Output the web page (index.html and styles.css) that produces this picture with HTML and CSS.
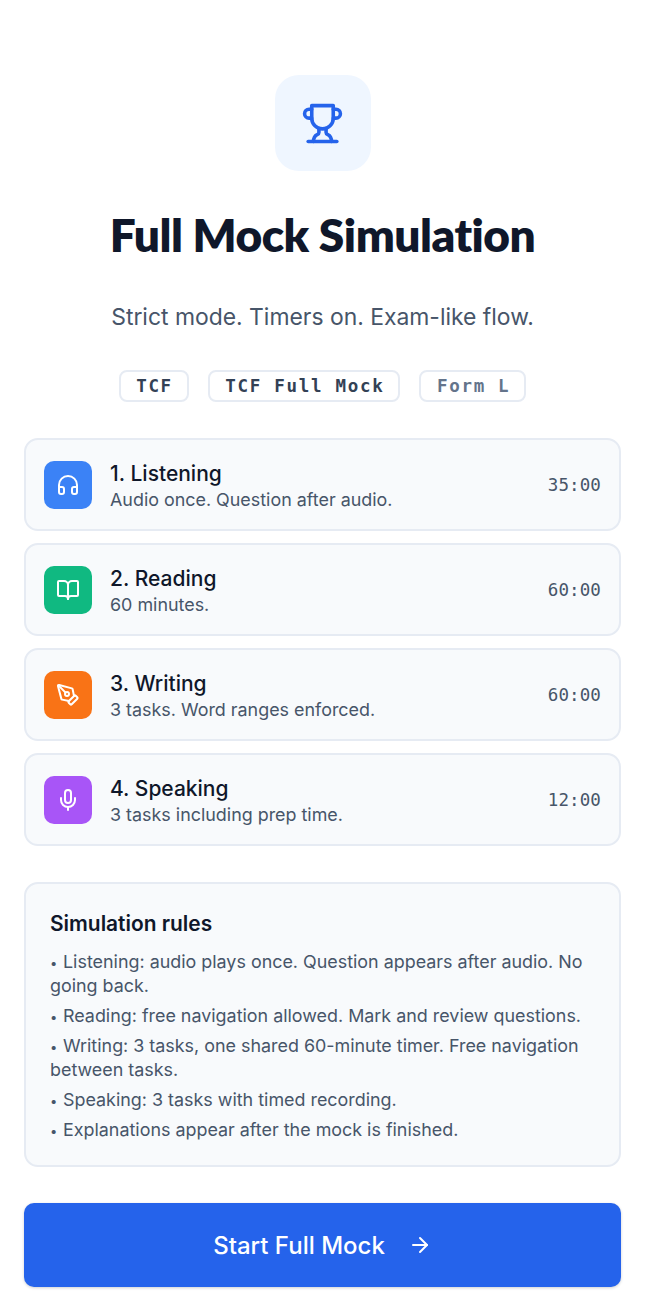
FILE: index.html
```html
<!DOCTYPE html>
<html lang="en">
<head>
  <meta charset="UTF-8" />
  <title>Full Mock Simulation</title>
  <meta name="viewport" content="width=device-width, initial-scale=1.0" />
  <link rel="stylesheet" href="styles.css">
</head>
<body>
  <main class="page">
    <div class="hero-icon">
      <svg class="ico" width="43" height="43" viewBox="0 0 24 24"><path d="M6 9H4.5a2.5 2.5 0 0 1 0-5H6"/><path d="M18 9h1.5a2.5 2.5 0 0 0 0-5H18"/><path d="M4 22h16"/><path d="M10 14.66V17c0 .55-.47.98-.97 1.21C7.85 18.75 7 20.24 7 22"/><path d="M14 14.66V17c0 .55.47.98.97 1.21C16.15 18.75 17 20.24 17 22"/><path d="M18 2H6v7a6 6 0 0 0 12 0V2Z"/></svg>
    </div>
    <h1 class="title">Full Mock Simulation</h1>
    <p class="subtitle">Strict mode. Timers on. Exam-like flow.</p>

    <div class="chips">
      <span class="chip">TCF</span>
      <span class="chip">TCF Full Mock</span>
      <span class="chip chip-muted">Form L</span>
    </div>

    <div class="sections">
      <div class="section">
        <div class="tile tile-blue">
          <svg class="ico" width="24" height="24" viewBox="0 0 24 24"><path d="M3 14h3a2 2 0 0 1 2 2v3a2 2 0 0 1-2 2H5a2 2 0 0 1-2-2v-7a9 9 0 0 1 18 0v7a2 2 0 0 1-2 2h-1a2 2 0 0 1-2-2v-3a2 2 0 0 1 2-2h3"/></svg>
        </div>
        <div class="section-text">
          <div class="section-name">1. Listening</div>
          <div class="section-desc">Audio once. Question after audio.</div>
        </div>
        <div class="section-time">35:00</div>
      </div>
      <div class="section">
        <div class="tile tile-green">
          <svg class="ico" width="24" height="24" viewBox="0 0 24 24"><path d="M12 7v14"/><path d="M3 18a1 1 0 0 1-1-1V4a1 1 0 0 1 1-1h5a4 4 0 0 1 4 4 4 4 0 0 1 4-4h5a1 1 0 0 1 1 1v13a1 1 0 0 1-1 1h-6a3 3 0 0 0-3 3 3 3 0 0 0-3-3z"/></svg>
        </div>
        <div class="section-text">
          <div class="section-name">2. Reading</div>
          <div class="section-desc">60 minutes.</div>
        </div>
        <div class="section-time">60:00</div>
      </div>
      <div class="section">
        <div class="tile tile-orange">
          <svg class="ico" width="24" height="24" viewBox="0 0 24 24"><path d="M15.707 21.293a1 1 0 0 1-1.414 0l-1.586-1.586a1 1 0 0 1 0-1.414l5.586-5.586a1 1 0 0 1 1.414 0l1.586 1.586a1 1 0 0 1 0 1.414z"/><path d="m18 13-1.375-6.874a1 1 0 0 0-.746-.776L3.235 2.028a1 1 0 0 0-1.207 1.207L5.35 15.879a1 1 0 0 0 .776.746L13 18"/><path d="m2.3 2.3 7.286 7.286"/><circle cx="11" cy="11" r="2"/></svg>
        </div>
        <div class="section-text">
          <div class="section-name">3. Writing</div>
          <div class="section-desc">3 tasks. Word ranges enforced.</div>
        </div>
        <div class="section-time">60:00</div>
      </div>
      <div class="section">
        <div class="tile tile-purple">
          <svg class="ico" width="24" height="24" viewBox="0 0 24 24"><path d="M12 19v3"/><path d="M19 10v2a7 7 0 0 1-14 0v-2"/><rect x="9" y="2" width="6" height="13" rx="3"/></svg>
        </div>
        <div class="section-text">
          <div class="section-name">4. Speaking</div>
          <div class="section-desc">3 tasks including prep time.</div>
        </div>
        <div class="section-time">12:00</div>
      </div>
    </div>

    <div class="rules">
      <h2 class="rules-title">Simulation rules</h2>
      <p class="rule">Listening: audio plays once. Question appears after audio. No going back.</p>
      <p class="rule">Reading: free navigation allowed. Mark and review questions.</p>
      <p class="rule">Writing: 3 tasks, one shared 60-minute timer. Free navigation between tasks.</p>
      <p class="rule">Speaking: 3 tasks with timed recording.</p>
      <p class="rule">Explanations appear after the mock is finished.</p>
    </div>

    <button class="start">
      <span>Start Full Mock</span>
      <svg class="ico" width="24" height="24" viewBox="0 0 24 24"><path d="M5 12h14"/><path d="m12 5 7 7-7 7"/></svg>
    </button>
  </main>
</body>
</html>
```

FILE: styles.css
```css
* {
  box-sizing: border-box;
}

body {
  margin: 0;
  background: #fff;
  color: #0f172a;
  font-family: Inter, "Noto Sans", sans-serif;
}

.page {
  display: flex;
  flex-direction: column;
  align-items: center;
  padding: 75px 24px 8px;
}

.ico {
  fill: none;
  stroke: currentColor;
  stroke-width: 2;
  stroke-linecap: round;
  stroke-linejoin: round;
}

.hero-icon {
  width: 96px;
  height: 96px;
  border-radius: 24px;
  background: #eff6ff;
  color: #2563eb;
  display: flex;
  align-items: center;
  justify-content: center;
}

.title {
  margin: 35px 0 0;
  font-family: Lato, Inter, sans-serif;
  font-size: 46px;
  line-height: 58px;
  font-weight: 800;
  letter-spacing: -0.5px;
  color: #0f172a;
}

.subtitle {
  margin: 37px 0 0;
  font-size: 22.9px;
  line-height: 32px;
  color: #475569;
}

.chips {
  display: flex;
  gap: 19px;
  margin-top: 37px;
}

.chip {
  height: 32px;
  padding: 0 14px 0 15.5px;
  border: 2px solid #e6ebf3;
  border-radius: 8px;
  display: flex;
  align-items: center;
  font-family: "DejaVu Sans Mono", monospace;
  font-size: 17.5px;
  font-weight: 700;
  letter-spacing: 1.7px;
  color: #334155;
}

.chip-muted {
  color: #64748b;
}

.sections {
  width: 100%;
  display: flex;
  flex-direction: column;
  gap: 12px;
  margin-top: 36px;
}

.section {
  height: 93px;
  padding: 0 18px;
  display: flex;
  align-items: center;
  gap: 18px;
  background: #f8fafc;
  border: 2px solid #e6ebf3;
  border-radius: 14px;
}

.tile {
  width: 48px;
  height: 48px;
  border-radius: 10px;
  color: #fff;
  display: flex;
  align-items: center;
  justify-content: center;
  flex-shrink: 0;
}

.tile-blue { background: #3b82f6; }
.tile-green { background: #10b981; }
.tile-orange { background: #f97316; }
.tile-purple { background: #a855f7; }

.section-text {
  flex: 1;
  padding-top: 3px;
}

.section-name {
  margin-bottom: 1px;
  font-size: 21px;
  line-height: 27px;
  font-weight: 500;
  color: #0f172a;
}

.section-desc {
  font-size: 17.9px;
  line-height: 24px;
  color: #475569;
}

.section-time {
  font-family: "DejaVu Sans Mono", monospace;
  font-size: 17.5px;
  letter-spacing: 0.1px;
  color: #475569;
}

.rules {
  width: 100%;
  height: 285px;
  margin-top: 36px;
  padding: 25px 24px;
  background: #f8fafc;
  border: 2px solid #e6ebf3;
  border-radius: 14px;
}

.rules-title {
  margin: 0 0 11px;
  font-size: 20.9px;
  line-height: 30px;
  font-weight: 600;
  color: #0f172a;
}

.rule {
  margin: 0 0 6px;
  font-size: 17.9px;
  line-height: 24px;
  color: #475569;
}

.rule::before {
  content: "•";
  display: inline-block;
  width: 13px;
  font-size: 13px;
  line-height: 0;
}

.start {
  width: 100%;
  height: 84px;
  margin-top: 36px;
  padding-top: 1px;
  border: 0;
  border-radius: 10px;
  background: #2563eb;
  color: #fff;
  box-shadow: 0 1px 3px rgba(15, 23, 42, 0.2);
  display: flex;
  align-items: center;
  justify-content: center;
  gap: 23px;
  font-family: Inter, sans-serif;
  font-size: 24px;
  font-weight: 500;
}
```
